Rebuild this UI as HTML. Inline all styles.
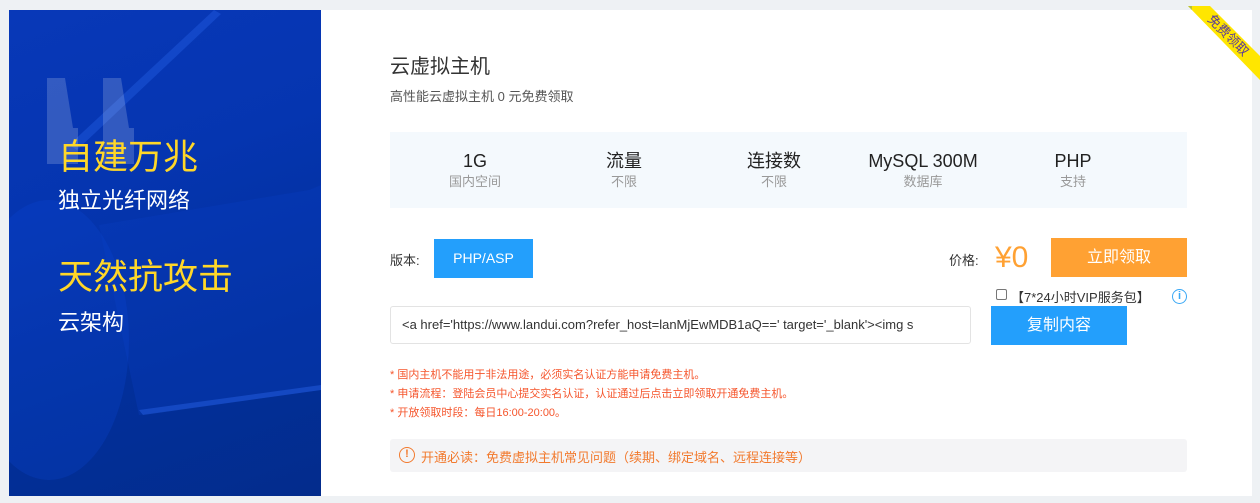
<!DOCTYPE html>
<html><head><meta charset="utf-8"><style>
*{margin:0;padding:0;box-sizing:border-box}
body{width:1260px;height:503px;background:#eef1f4;font-family:"Liberation Sans","Noto Sans CJK SC",sans-serif;position:relative;overflow:hidden}
.card{position:absolute;left:9px;top:10px;width:1243px;height:486px;background:#fff;overflow:hidden}
.left{position:absolute;left:0;top:0;width:312px;height:486px;background:linear-gradient(160deg,#0838b8 0%,#0535b0 35%,#022f9a 70%,#032c8c 100%);overflow:hidden}
.abs{position:absolute}
.t{white-space:nowrap}
.spec{position:absolute;left:381px;top:122px;width:797px;height:76px;background:#f4f9fd}
.col{position:absolute;top:17px;width:150px;text-align:center}
.col b{display:block;font-weight:normal;font-size:18px;color:#222;line-height:24px}
.col i{display:block;font-style:normal;font-size:13px;color:#999;line-height:18px}
</style></head><body>
<div class="card">
 <div class="left">
  <svg class="abs" style="left:0;top:0" width="312" height="486">
   <path d="M60 135 L205 0 L212 4 L68 140Z" fill="#2a66ee" opacity=".35"/>
   <path d="M90 215 L300 180 L312 175 L312 380 L130 405Z" fill="#0b3fc4" opacity=".3"/>
   <path d="M130 400 L312 375 L312 380 L134 405Z" fill="#2d68f0" opacity=".4"/>
   <ellipse cx="40" cy="330" rx="80" ry="140" fill="#0d47d8" opacity=".25"/>
   <path d="M38 68 h18 l8 50 h5 v36 h-31 v-40Z M94 68 h18 l8 50 h5 v36 h-31 v-40Z" fill="#ffffff" opacity=".18"/>
  </svg>
  <div class="abs t" style="left:49px;top:128px;font-size:35px;color:#ffd728;line-height:40px">自建万兆</div>
  <div class="abs t" style="left:49px;top:176px;font-size:22px;color:#fff;line-height:30px">独立光纤网络</div>
  <div class="abs t" style="left:49px;top:248px;font-size:35px;color:#ffd728;line-height:40px">天然抗攻击</div>
  <div class="abs t" style="left:49px;top:298px;font-size:22px;color:#fff;line-height:30px">云架构</div>
 </div>
 <div class="abs t" style="left:381px;top:40px;font-size:20px;color:#333">云虚拟主机</div>
 <div class="abs t" style="left:381px;top:76px;font-size:13px;color:#555">高性能云虚拟主机 0 元免费领取</div>
 <div class="spec">
  <div class="col" style="left:10px"><b>1G</b><i>国内空间</i></div>
  <div class="col" style="left:159px"><b>流量</b><i>不限</i></div>
  <div class="col" style="left:309px"><b>连接数</b><i>不限</i></div>
  <div class="col" style="left:458px"><b>MySQL 300M</b><i>数据库</i></div>
  <div class="col" style="left:608px"><b>PHP</b><i>支持</i></div>
 </div>
 <div class="abs t" style="left:381px;top:240px;font-size:13px;color:#333">版本:</div>
 <div class="abs" style="left:425px;top:229px;width:99px;height:39px;background:#239ffc;color:#fff;font-size:14px;text-align:center;line-height:39px">PHP/ASP</div>
 <div class="abs t" style="left:940px;top:240px;font-size:13px;color:#333">价格:</div>
 <div class="abs t" style="left:986px;top:229px;font-size:30px;color:#ffa133;line-height:38px">¥0</div>
 <div class="abs" style="left:1042px;top:228px;width:136px;height:39px;background:#ffa133;color:#fff;font-size:16px;text-align:center;line-height:39px">立即领取</div>
 <div class="abs" style="left:987px;top:279px;width:11px;height:11px;border:1px solid #777;border-radius:2px"></div>
 <div class="abs t" style="left:1002px;top:277px;font-size:13px;color:#333">【7*24小时VIP服务包】</div>
 <div class="abs" style="left:1163px;top:279px;width:15px;height:15px;border:1.5px solid #3aa8f5;border-radius:50%;color:#3aa8f5;font-size:11px;text-align:center;line-height:12px;font-weight:bold">i</div>
 <div class="abs t" style="left:381px;top:296px;width:581px;height:38px;border:1px solid #e3e3e3;border-radius:3px;font-size:13px;color:#333;line-height:36px;padding-left:11px;overflow:hidden">&lt;a href='https://www.landui.com?refer_host=lanMjEwMDB1aQ==' target='_blank'&gt;&lt;img s</div>
 <div class="abs" style="left:982px;top:296px;width:136px;height:39px;background:#239ffc;color:#fff;font-size:16px;text-align:center;line-height:39px">复制内容</div>
 <div class="abs t" style="left:381px;top:356px;font-size:11px;color:#f5552c;line-height:19px">* 国内主机不能用于非法用途，必须实名认证方能申请免费主机。<br>* 申请流程：登陆会员中心提交实名认证，认证通过后点击立即领取开通免费主机。<br>* 开放领取时段：每日16:00-20:00。</div>
 <div class="abs" style="left:381px;top:429px;width:797px;height:33px;background:#f4f4f6;border-radius:3px"></div>
 <div class="abs" style="left:390px;top:437px;width:16px;height:16px;border:1.5px solid #f27a2e;border-radius:50%;color:#f27a2e;font-size:11px;text-align:center;line-height:13px;font-weight:bold">!</div>
 <div class="abs t" style="left:412px;top:437px;font-size:13px;color:#f27a2e">开通必读：免费虚拟主机常见问题（续期、绑定域名、远程连接等）</div>
</div>
<svg class="abs" style="left:1180px;top:0" width="80" height="90">
 <polygon points="8,6 30,6 80,56 80,80" fill="#ffe600"/>
 <polygon points="8,6 12,6 12,10" fill="#b7c23a"/>
</svg>
<div class="abs t" style="left:1203px;top:25px;font-size:13px;color:#5a3b9a;transform:rotate(45deg);transform-origin:50% 50%">免费领取</div>
</body></html>
